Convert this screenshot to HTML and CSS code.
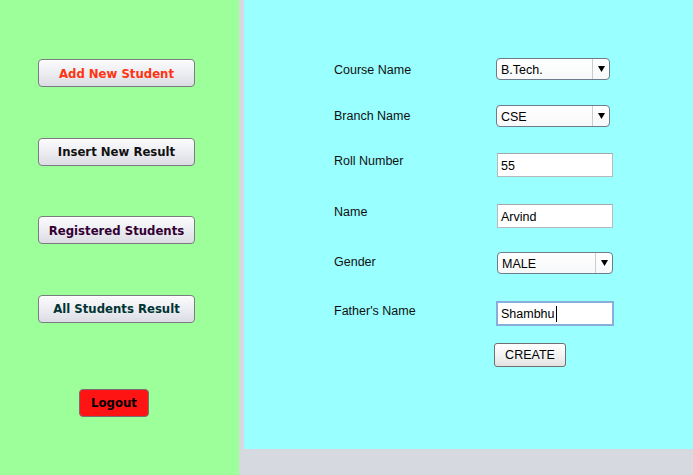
FILE: index.html
```html
<!DOCTYPE html>
<html>
<head>
<meta charset="utf-8">
<link rel="stylesheet" href="styles.css">
</head>
<body>
<div class="app">
  <div class="sidebar">
    <button class="nav-btn c-red">Add New Student</button>
    <button class="nav-btn c-black">Insert New Result</button>
    <button class="nav-btn c-purple">Registered Students</button>
    <button class="nav-btn c-teal">All Students Result</button>
    <button class="logout-btn">Logout</button>
  </div>
  <div class="main">
    <div class="form">
      <div class="label lift-5">Course Name</div>
      <div class="combo"><span class="combo-value">B.Tech.</span><span class="combo-arrow"><svg width="7" height="6" viewBox="0 0 7 6"><path d="M0 0H7L3.5 6Z" fill="#000"/></svg></span></div>

      <div class="label lift-4">Branch Name</div>
      <div class="combo"><span class="combo-value">CSE</span><span class="combo-arrow"><svg width="7" height="6" viewBox="0 0 7 6"><path d="M0 0H7L3.5 6Z" fill="#000"/></svg></span></div>

      <div class="label lift-1">Roll Number</div>
      <div class="field">55</div>

      <div class="label lift-1">Name</div>
      <div class="field">Arvind</div>

      <div class="label lift-3">Gender</div>
      <div class="combo combo-wide"><span class="combo-value">MALE</span><span class="combo-arrow"><svg width="7" height="6" viewBox="0 0 7 6"><path d="M0 0H7L3.5 6Z" fill="#000"/></svg></span></div>

      <div class="label lift-3">Father's Name</div>
      <div class="field field-focus">Shambhu<span class="caret"></span></div>

      <div class="label"></div>
      <div class="create-cell"><button class="create-btn">CREATE</button></div>
    </div>
  </div>
</div>
</body>
</html>
```

FILE: styles.css
```css
html, body {
  margin: 0;
  padding: 0;
}
body {
  background: #d6d9df;
  width: 693px;
  height: 475px;
  overflow: hidden;
  font-family: "Liberation Sans", Arial, sans-serif;
}
.app {
  display: flex;
  height: 475px;
  gap: 5px;
}
.sidebar {
  width: 239px;
  height: 475px;
  background: #9dff99;
  display: flex;
  flex-direction: column;
  align-items: flex-start;
  padding: 59px 0 0 38px;
  box-sizing: border-box;
  gap: 50.67px;
}
.nav-btn {
  width: 157px;
  height: 28px;
  border: 1px solid #7c7c80;
  border-radius: 4px;
  background: linear-gradient(#fbfbfc 0%, #eeeff3 45%, #dcdde4 100%);
  box-shadow: inset 0 1px 0 #ffffff;
  font-family: "DejaVu Sans Condensed", "DejaVu Sans", sans-serif;
  font-stretch: condensed;
  font-weight: bold;
  font-size: 13px;
  padding: 0;
  margin: 0;
}
.c-red { color: #ff3311; }
.c-black { color: #111111; }
.c-purple { color: #330033; }
.c-teal { color: #003333; }
.logout-btn {
  margin: 15.33px 0 0 41px;
  width: 70px;
  height: 28px;
  border: 1px solid #7a6e74;
  border-radius: 4px;
  background: #ff1414;
  color: #000;
  font-family: "DejaVu Sans Condensed", "DejaVu Sans", sans-serif;
  font-stretch: condensed;
  font-weight: bold;
  font-size: 13px;
  padding: 0;
}
.main {
  width: 449px;
  height: 449px;
  background: #99ffff;
}
.form {
  display: grid;
  grid-template-columns: 163px 120px;
  grid-template-rows: 47px 48px 51px 48px 49px 42px 24px;
  align-items: start;
  padding: 58px 0 0 90px;
}
.label {
  font-size: 12.5px;
  line-height: 15px;
  color: #111;
  padding-top: 2px;
}
.lift-1 { padding-top: 1px; }
.lift-3 { padding-top: 3px; }
.lift-4 { padding-top: 4px; }
.lift-5 { padding-top: 5px; }
.combo {
  width: 114px;
  height: 22px;
  box-sizing: border-box;
  margin-left: -1px;
  border: 1px solid #6f7c8c;
  border-radius: 4px;
  background: linear-gradient(#ffffff, #f7f8f9);
  display: flex;
  align-items: stretch;
  font-size: 12.5px;
  color: #000;
}
.combo-wide { width: 116px; margin-left: 0; }
.combo-value {
  flex: 1;
  display: flex;
  align-items: center;
  padding-left: 4px;
  padding-top: 1px;
}
.combo-arrow {
  width: 16px;
  border-left: 1px solid #c9ccd0;
  display: flex;
  align-items: center;
  justify-content: center;
}
.field {
  width: 116px;
  height: 24px;
  box-sizing: border-box;
  border: 1px solid #b7b9bc;
  border-top-color: #a4a7ab;
  background: #fff;
  font-size: 12.5px;
  color: #000;
  display: flex;
  align-items: center;
  padding-left: 3px;
  padding-top: 1px;
}
.field-focus {
  width: 118px;
  height: 25px;
  margin-left: -1px;
  border: 2px solid #8aaedb;
  padding-left: 3px;
}
.caret {
  display: inline-block;
  width: 1px;
  height: 16px;
  background: #000;
  margin-left: 1px;
}
.create-cell { margin-left: -3px; }
.create-btn {
  width: 72px;
  height: 24px;
  border: 1px solid #707070;
  border-radius: 3px;
  background: linear-gradient(#ffffff 0%, #f4f4f4 50%, #e2e2e2 100%);
  font-family: "Liberation Sans", Arial, sans-serif;
  font-size: 12.5px;
  color: #000;
  padding: 0;
}
```
